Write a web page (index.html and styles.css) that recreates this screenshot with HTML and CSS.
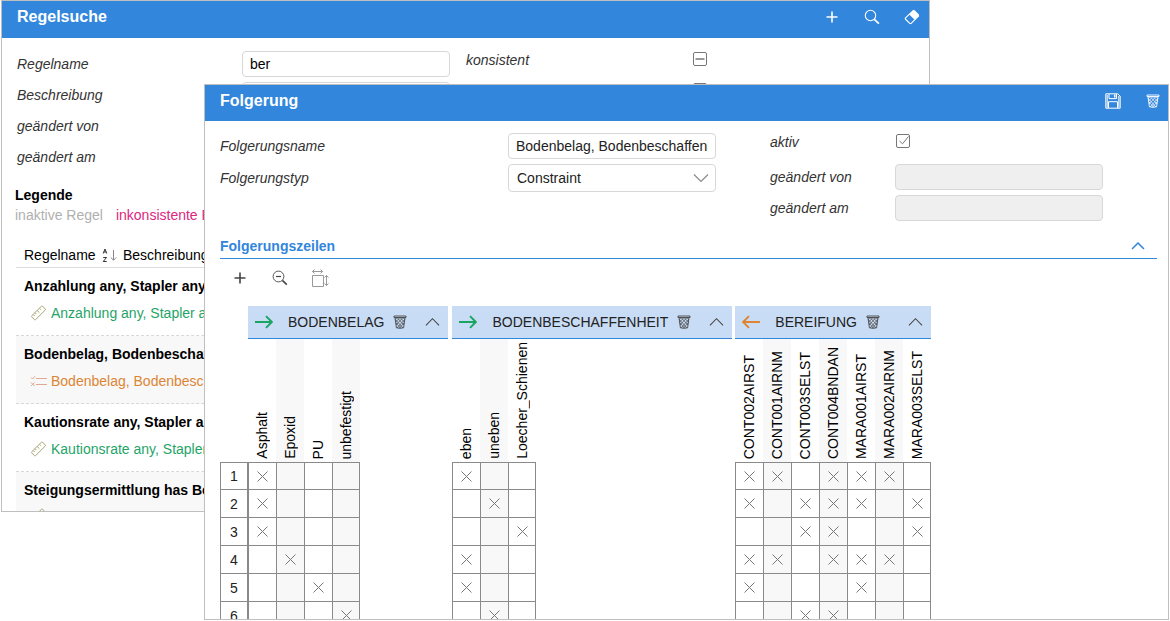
FILE: index.html
```html
<!DOCTYPE html>
<html lang="de">
<head>
<meta charset="utf-8">
<title>Regelsuche</title>
<link rel="stylesheet" href="styles.css">
</head>
<body>
<svg class="sprite" aria-hidden="true">
  <symbol id="plus" viewBox="0 0 12 12"><path d="M6 .5v11M.5 6h11" fill="none" stroke="currentColor" stroke-width="1.6"/></symbol>
  <symbol id="search" viewBox="0 0 16 16"><circle cx="6.500" cy="6.500" r="5.200" fill="none" stroke="currentColor" stroke-width="1.100"/><path d="M10.300 10.300l4.600 4.400" stroke="currentColor" stroke-width="1.700"/></symbol>
  <symbol id="zoom-out" viewBox="0 0 16 16"><circle cx="6.500" cy="6.500" r="5.400" fill="none" stroke="currentColor" stroke-width=".9"/><path d="M4 6.500h5" stroke="currentColor" stroke-width="1.200"/><path d="M10.400 10.400l4.400 4.200" stroke="currentColor" stroke-width="1.600"/></symbol>
  <symbol id="eraser" viewBox="0 0 16 16"><path d="M1.300 10l4.400 4.400q.8.500 1.500 0L14.600 7 9.300 1.500 1.500 8.900q-.6.600-.2 1.100z" fill="none" stroke="currentColor" stroke-width="1.100"/><path d="M5.300 5.500l4.200-4.100q.7-.6 1.400 0l3.800 3.900q.6.700 0 1.400l-4.100 4z" fill="currentColor"/></symbol>
  <symbol id="save" viewBox="0 0 16 16"><path d="M.8.8h12l2.400 2.400v12H.8zM4 1v4.600h7.500V1M3.500 15V8.700h9V15M2.200 2v12.500M13.800 3v11.500" fill="none" stroke="currentColor"/><path d="M9 1.500h1.500v3H9z" fill="currentColor"/></symbol>
  <symbol id="trash" viewBox="0 0 14 14"><path d="M1 1h12v1.500H1zM2 2.500l1.400 10.300q3.600 1 7.200 0L12 2.500" fill="none" stroke="currentColor" stroke-width=".9"/><path d="M2.300 4.500l7.700 8.500M4 2.500l7 7.500M7 2.500l4.600 4.800M9.700 2.500l2 2M11.700 4.500L4 13M10 2.500l-7 7.500M7 2.500L2.500 7.300M4.300 2.500l-2 2M3 8l4.500 5M11 8l-4.500 5" fill="none" stroke="currentColor" stroke-width=".7"/></symbol>
  <symbol id="chevron-up" viewBox="0 0 16 10"><path d="M1 8.500l7-7 7 7" fill="none" stroke="currentColor" stroke-width="1.100"/></symbol>
  <symbol id="chevron-up-bold" viewBox="0 0 14 8"><path d="M1 7l6-6 6 6" fill="none" stroke="currentColor" stroke-width="1.500"/></symbol>
  <symbol id="chevron-down" viewBox="0 0 16 10"><path d="M1 1.500l7 7 7-7" fill="none" stroke="currentColor" stroke-width="1.100"/></symbol>
  <symbol id="arrow-right" viewBox="0 0 18 14"><path d="M0 7h16.500M11 1.200L16.800 7 11 12.800" fill="none" stroke="currentColor" stroke-width="1.900"/></symbol>
  <symbol id="arrow-left" viewBox="0 0 18 14"><path d="M18 7H1.500M7 1.200L1.200 7 7 12.800" fill="none" stroke="currentColor" stroke-width="1.900"/></symbol>
  <symbol id="resize" viewBox="0 0 18 18"><path d="M1.500 6.500h11v11h-11zM1.500 2.500h10M3.500.5l-2 2 2 2M9.500.5l2 2-2 2M15.500 6.500v10M13.500 8.500l2-2 2 2M13.500 14.500l2 2 2-2" fill="none" stroke="currentColor"/></symbol>
  <symbol id="ruler" viewBox="0 0 16 16"><path d="M1.200 10.800L11 1.200q.5-.4 1 0l2.800 2.800q.4.500 0 1L5 14.700q-.5.400-1 0L1.200 11.800q-.4-.5 0-1zM4.500 7.700l1.500 1.500M6.700 5.500l2.200 2.200M9 3.300l1.500 1.500M2.700 9.500l1.500 1.500" fill="none" stroke="currentColor"/></symbol>
  <symbol id="checklist" viewBox="0 0 17 12"><path d="M1 2.500L2.500 4 5 1.200M1 7.500l3.500 3.500M4.500 7.500L1 11M6 3.500h11M6 9.500h11" fill="none" stroke="currentColor"/></symbol>
  <symbol id="sort" viewBox="0 0 15 15"><path d="M11.500 2v10M8.800 9.500l2.700 2.700 2.700-2.700" fill="none" stroke="#888"/><path d="M1.200 5.500L3 1l1.800 4.500M1.900 4h2.200M1.200 9.500h3.300l-3.300 4h3.500" fill="none" stroke="#333"/></symbol>
  <symbol id="cross" viewBox="0 0 11 11"><path d="M.5.5l10 10M10.500.5l-10 10" fill="none" stroke="currentColor"/></symbol>
  <symbol id="tick" viewBox="0 0 14 14"><path d="M3.500 7L6.500 9.800 12.500 2.500" fill="none" stroke="currentColor"/></symbol>
  <symbol id="dash" viewBox="0 0 14 14"><path d="M2.500 7h9" fill="none" stroke="currentColor" stroke-width="1.500"/></symbol>
</svg>

<main class="desktop">
  <section class="window window-search">
    <header class="titlebar titlebar-tall">
      <h1>Regelsuche</h1>
      <button type="button" aria-label="Neu"><svg class="i12"><use href="#plus"/></svg></button>
      <button type="button" aria-label="Suchen"><svg class="i16"><use href="#search"/></svg></button>
      <button type="button" aria-label="Leeren"><svg class="i16"><use href="#eraser"/></svg></button>
    </header>
    <form class="form form-search">
      <div class="fields">
        <div class="field"><label for="r-name">Regelname</label><input id="r-name" class="text" type="text" value="ber"></div>
        <div class="field"><label for="r-desc">Beschreibung</label><input id="r-desc" class="text" type="text"></div>
        <div class="field"><label for="r-by">geändert von</label><input id="r-by" class="text" type="text"></div>
        <div class="field"><label for="r-at">geändert am</label><input id="r-at" class="text" type="text"></div>
      </div>
      <div class="fields">
        <div class="field field-check"><label for="r-cons">konsistent</label><span class="check"><input id="r-cons" type="checkbox"><svg><use href="#dash"/></svg></span></div>
        <div class="field field-check"><span></span><span class="check"><input type="checkbox" aria-label="aktiv"><svg><use href="#dash"/></svg></span></div>
      </div>
    </form>
    <div class="legend">
      <h2>Legende</h2>
      <p><span class="inactive">inaktive Regel</span><span class="inconsistent">inkonsistente Regel</span></p>
    </div>
    <table class="rules">
      <thead>
        <tr><th class="col-name">Regelname <svg><use href="#sort"/></svg></th><th>Beschreibung</th></tr>
      </thead>
      <tbody>
        <tr><td colspan="2"><strong>Anzahlung any, Stapler any</strong><a href="#" class="calc"><svg><use href="#ruler"/></svg>Anzahlung any, Stapler any</a></td></tr>
        <tr><td colspan="2"><strong>Bodenbelag, Bodenbeschaffenheit</strong><a href="#" class="constraint"><svg><use href="#checklist"/></svg>Bodenbelag, Bodenbeschaffenheit</a></td></tr>
        <tr><td colspan="2"><strong>Kautionsrate any, Stapler any</strong><a href="#" class="calc"><svg><use href="#ruler"/></svg>Kautionsrate any, Stapler any</a></td></tr>
        <tr><td colspan="2"><strong>Steigungsermittlung has Bodenbelag</strong><a href="#" class="calc" aria-label="Steigungsermittlung"><svg><use href="#ruler"/></svg></a></td></tr>
      </tbody>
    </table>
  </section>

  <section class="window window-conclusion">
    <header class="titlebar">
      <h1>Folgerung</h1>
      <button type="button" aria-label="Speichern"><svg class="i16"><use href="#save"/></svg></button>
      <button type="button" aria-label="Löschen"><svg class="i14"><use href="#trash"/></svg></button>
    </header>
    <div class="content">
      <form class="form form-conclusion">
        <div class="fields">
          <div class="field"><label for="f-name">Folgerungsname</label><input id="f-name" class="text" type="text" value="Bodenbelag, Bodenbeschaffenheit"></div>
          <div class="field"><label for="f-type">Folgerungstyp</label><span class="select"><select id="f-type"><option>Constraint</option></select><svg><use href="#chevron-down"/></svg></span></div>
        </div>
        <div class="fields">
          <div class="field field-check"><label for="f-active">aktiv</label><span class="check"><input id="f-active" type="checkbox" checked><svg><use href="#tick"/></svg></span></div>
          <div class="field"><label for="f-by">geändert von</label><input id="f-by" class="text" type="text" disabled></div>
          <div class="field"><label for="f-at">geändert am</label><input id="f-at" class="text" type="text" disabled></div>
        </div>
      </form>
      <div class="section-head">
        <h2>Folgerungszeilen</h2>
        <button type="button" aria-label="Einklappen"><svg><use href="#chevron-up-bold"/></svg></button>
      </div>
      <div class="toolbar">
        <button type="button" aria-label="Zeile hinzufügen"><svg class="i12"><use href="#plus"/></svg></button>
        <button type="button" aria-label="Verkleinern"><svg class="i16"><use href="#zoom-out"/></svg></button>
        <button type="button" aria-label="Größe anpassen" class="muted"><svg class="i18"><use href="#resize"/></svg></button>
      </div>
      <div class="matrix" id="matrix"></div>
    </div>
  </section>
</main>
<script src="script.js"></script>
</body>
</html>
```
FILE: styles.css
```css
* { box-sizing: border-box; }

body {
  margin: 0;
  background: #fff;
  color: #000;
  font: 14px/18px "Liberation Sans", Arial, sans-serif;
}

h1, h2, p { margin: 0; }
h1 { font-size: 16px; }
h2 { font-size: 14px; }
svg { display: block; }
.sprite { position: absolute; width: 0; height: 0; }

button {
  display: grid;
  place-items: center;
  padding: 0;
  border: 0;
  background: none;
  color: inherit;
}

.i12 { width: 12px; height: 12px; }
.i14 { width: 14px; height: 14px; }
.i16 { width: 16px; height: 16px; }
.i18 { width: 18px; height: 18px; }

.desktop { position: relative; height: 100vh; overflow: hidden; }

.window {
  position: absolute;
  overflow: hidden;
  border: 1px solid #bfbfbf;
  background: #fff;
}
.window-search { inset: 0 240px 109px 1px; }
.window-conclusion { inset: 84px 1px 1px 204px; }

.titlebar {
  display: flex;
  align-items: center;
  gap: 20px;
  height: 36px;
  padding: 0 5px 4px 15px;
  background: #3286dc;
  color: #fff;
}
.titlebar-tall { height: 37px; padding: 0 7px 5px 15px; }
.titlebar h1 { flex: 1; }
.titlebar button { width: 20px; height: 20px; }

.form { display: grid; }
.form-search { grid-template-columns: 433px 1fr; gap: 16px; padding: 13px 15px 0; }
.form-conclusion { grid-template-columns: 496px 1fr; gap: 54px; padding-top: 12px; }

.fields { display: flex; flex-direction: column; gap: 5px; }
.field { display: grid; align-items: center; min-height: 26px; }
.form-search .field { grid-template-columns: 225px 208px; }
.form-search .field-check { grid-template-columns: 227px 14px; }
.form-conclusion .field { grid-template-columns: 288px 208px; }
.form-conclusion .fields + .fields .field { grid-template-columns: 125px 208px; }
.field-check { align-items: start; }

label { color: #333; font-style: italic; }

.text, select {
  width: 100%;
  height: 26px;
  padding: 0 7px;
  border: 1px solid #d8d8d8;
  border-radius: 4px;
  background: #fff;
  color: #000;
  font: inherit;
}
.text:disabled { background: #efefef; }
.window-conclusion .text, .window-conclusion select { color: #222; }

.select { display: grid; align-items: center; }
.select > * { grid-area: 1 / 1; }
.select select { height: 28px; padding: 0 8px; appearance: none; }
.select svg { justify-self: end; width: 16px; height: 10px; margin-right: 7px; color: #888; pointer-events: none; }

.check { display: grid; width: 14px; height: 14px; margin: 1px; }
.form-search .check { margin: 1px 0; }
.check > * { grid-area: 1 / 1; width: 14px; height: 14px; }
.check input { margin: 0; appearance: none; border: 1px solid #777; border-radius: 2px; background: #fff; }
.check svg { color: #777; pointer-events: none; }

.legend { padding: 15px 13px 0; line-height: 20px; }
.legend p { display: flex; gap: 13px; }
.inactive { color: #b0b0b0; }
.inconsistent { color: #dc267f; }

.rules {
  width: calc(100% - 28px);
  margin: 21px 14px 0;
  border-spacing: 0;
  table-layout: fixed;
}
.rules th {
  height: 22px;
  padding: 0 0 3px;
  border-bottom: 1px solid #ddd;
  font-weight: normal;
  text-align: left;
}
.rules .col-name { width: 107px; padding-left: 8px; }
.rules th svg { display: inline-block; width: 15px; height: 15px; margin-left: 2px; vertical-align: -3px; }
.rules td { height: 68px; padding: 9px 8px 13px; border-bottom: 1px dashed #d8d8d8; vertical-align: top; }
.rules tr:nth-child(even) td { background: #f8f8f8; }
.rules strong { display: block; }
.rules a { display: flex; align-items: center; gap: 4px; margin-top: 9px; padding-left: 6px; text-decoration: none; }
.rules a svg { width: 17px; height: 16px; }
.calc { color: #1fa467; }
.calc svg { color: #a9a474; }
.constraint { color: #dd8534; }
.constraint svg { color: #e3a793; }

.content { padding: 0 11px 0 15px; }

.section-head {
  display: flex;
  align-items: center;
  justify-content: space-between;
  height: 25px;
  margin-top: 13px;
  padding-right: 12px;
  border-bottom: 1px solid #3286dc;
  color: #3286dc;
}
.section-head svg { width: 14px; height: 8px; }

.toolbar { display: flex; gap: 20px; padding: 9px 0 18px 10px; color: #444; }
.toolbar button { width: 20px; height: 20px; }
.toolbar .muted { color: #999; }

.matrix { display: flex; align-items: flex-start; }
.group + .group { margin-left: 4px; }
.group + .group:last-child { margin-left: 3px; }
.group-head {
  display: flex;
  align-items: center;
  height: 33px;
  padding: 0 8px 0 7px;
  border-bottom: 1px solid #3286dc;
  background: #c9dcf5;
  color: #222;
}
.group-head .direction { width: 18px; height: 14px; margin-right: 15px; }
.group-head .out { color: #1aa560; }
.group-head .in { color: #e0852f; }
.group-head h3 { margin: 0 9px 0 0; font-size: 14px; font-weight: normal; }
.group-head button { color: #444; }
.group-head h3 + button { margin-right: 18px; }
.group-head button:last-child { margin-left: auto; }
.group-head .fold { width: 15px; height: 10px; }

.grid { border-spacing: 0; table-layout: fixed; }
.grid th, .grid td { width: 28px; padding: 0; }
.grid thead th { height: 123px; padding-bottom: 3px; font-weight: normal; vertical-align: bottom; }
.grid thead span { display: block; width: 28px; line-height: 28px; writing-mode: vertical-rl; transform: rotate(180deg); }
.grid tbody th, .grid tbody td {
  height: 28px;
  border: solid #8a8a8a;
  border-width: 1px 0 0 1px;
  color: #222;
  font-weight: normal;
}
.grid tbody tr:first-child > * { height: 27px; }
.grid tbody tr > :last-child { border-right-width: 1px; }
.grid tr > :nth-child(even) { background: #f8f8f8; }
.grid td svg { width: 11px; height: 11px; margin: auto; color: #777; }
.row-numbers { margin-top: 156px; }
```
FILE: script.js
```js
const groups = [
  { name: "BODENBELAG", dir: "right", columns: ["Asphalt", "Epoxid", "PU", "unbefestigt"],
    rows: ["x...", "x...", "x...", ".x..", "..x.", "...x"] },
  { name: "BODENBESCHAFFENHEIT", dir: "right", columns: ["eben", "uneben", "Loecher_Schienen"],
    rows: ["x..", ".x.", "..x", "x..", "x..", ".x."] },
  { name: "BEREIFUNG", dir: "left",
    columns: ["CONT002AIRST", "CONT001AIRNM", "CONT003SELST", "CONT004BNDAN", "MARA001AIRST", "MARA002AIRNM", "MARA003SELST"],
    rows: ["xx.xxx.", "x.xxx.x", "..xx..x", "xx.xxx.", "x...x..", "..xx..."] }
];

const icon = (id, cls = "") => `<svg class="${cls}"><use href="#${id}"/></svg>`;

const numbers = groups[0].rows.map((_, i) => `<tr><th>${i + 1}</th></tr>`).join("");

const renderGroup = g => `
  <section class="group">
    <div class="group-head">
      ${icon("arrow-" + g.dir, "direction " + (g.dir === "right" ? "out" : "in"))}
      <h3>${g.name}</h3>
      <button type="button" aria-label="Löschen">${icon("trash", "i14")}</button>
      <button type="button" aria-label="Einklappen">${icon("chevron-up", "fold")}</button>
    </div>
    <table class="grid">
      <thead><tr>${g.columns.map(c => `<th><span>${c}</span></th>`).join("")}</tr></thead>
      <tbody>${g.rows.map(r => `<tr>${[...r].map(c => `<td>${c === "x" ? icon("cross") : ""}</td>`).join("")}</tr>`).join("")}</tbody>
    </table>
  </section>`;

document.getElementById("matrix").innerHTML =
  `<table class="grid row-numbers"><tbody>${numbers}</tbody></table>` + groups.map(renderGroup).join("");
```
